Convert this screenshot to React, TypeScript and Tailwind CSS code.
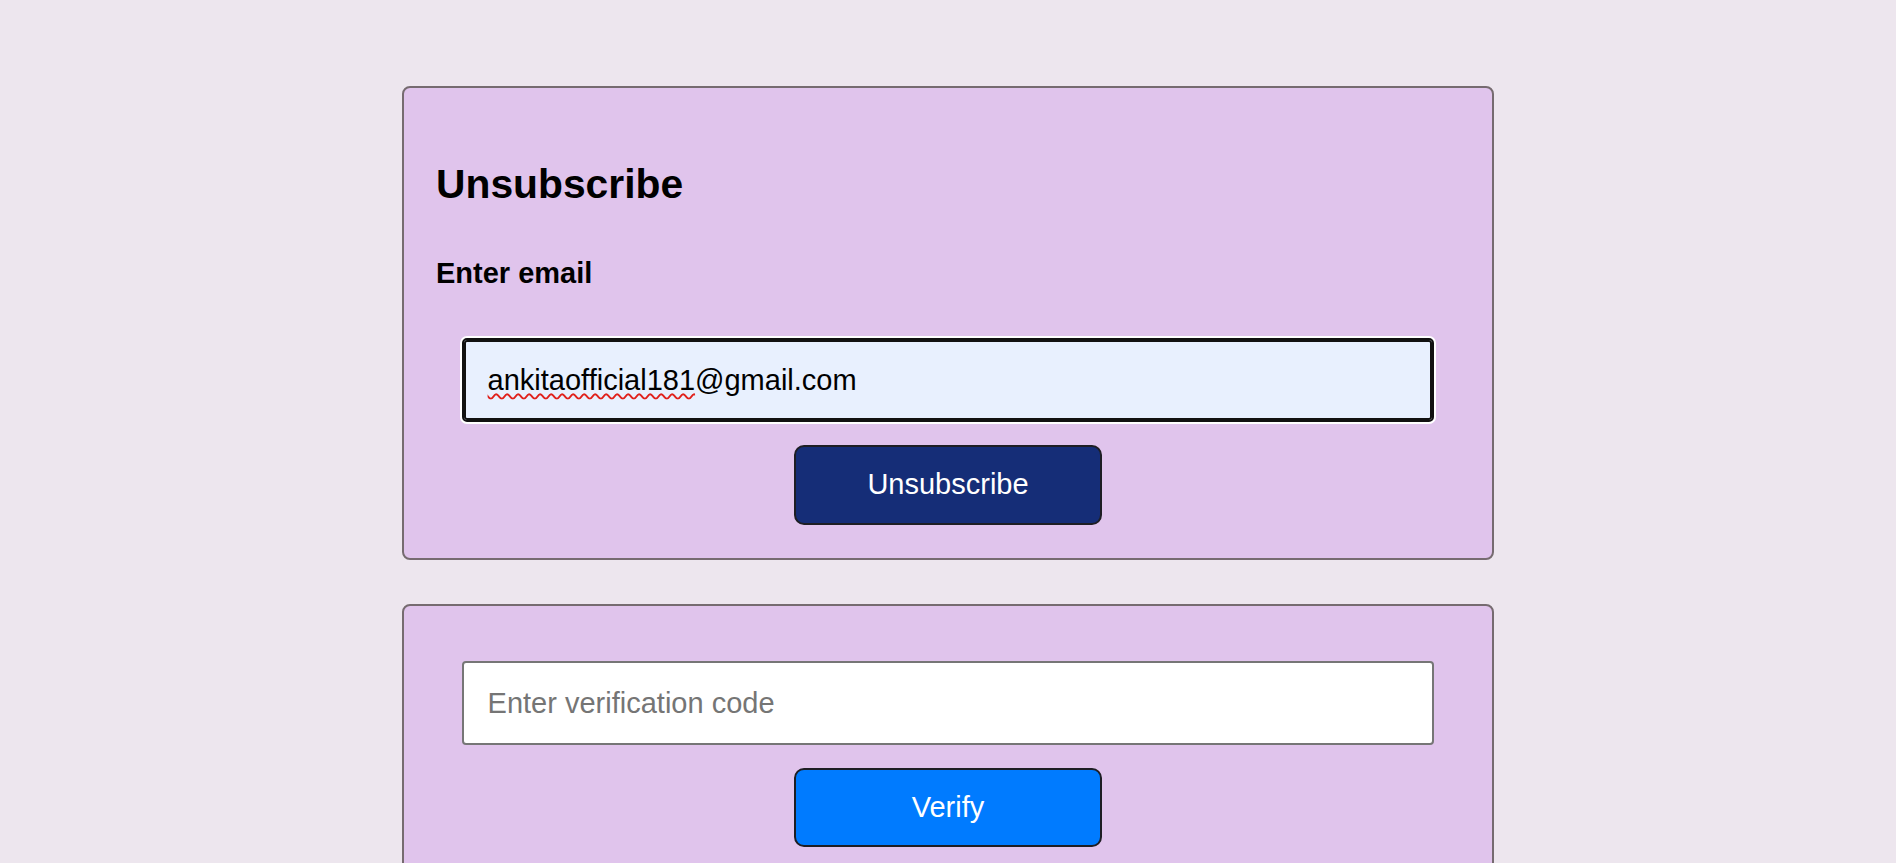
import React from "react";

export default function App() {
  const font = { fontFamily: '"Liberation Sans", Arial, sans-serif' };
  return (
    <div
      className="min-h-[863px] w-full bg-[#ede6ee] pt-[85.5px] pb-[40px] text-black"
      style={font}
    >
      <div className="mx-auto flex w-[1092px] flex-col gap-[44px]">
        {/* Card 1 */}
        <div className="flex flex-col rounded-[8px] border-2 border-[#766b70] bg-[#e0c4ec] px-[32px] pb-[33px]">
          <h1 className="mt-[73.5px] text-[40.8px] font-bold leading-[46px]">Unsubscribe</h1>
          <label className="mt-[49.5px] text-[29px] font-bold leading-[33px]">Enter email</label>
          <div className="relative mx-auto mt-[48.5px] w-[95%]">
            <input
              type="email"
              readOnly
              value="ankitaofficial181@gmail.com"
              className="block h-[84px] w-full rounded-[5px] border-2 border-[#111] bg-[#e8f0fe] px-[24px] text-[29px] text-black shadow-[inset_0_0_0_2px_#111,0_0_0_2px_#fff] outline-none"
              style={font}
            />
            <span
              aria-hidden="true"
              className="pointer-events-none absolute left-[26px] top-1/2 -translate-y-1/2 text-[29px] leading-[33px] text-transparent underline decoration-[#e0201b] decoration-wavy decoration-[2px] underline-offset-[3px]"
            >
              ankitaofficial181
            </span>
          </div>
          <button className="mx-auto mt-[22.8px] h-[80px] w-[30%] rounded-[10px] border-2 border-[#1e1e24] bg-[#152d77] text-[29px] text-white">
            Unsubscribe
          </button>
        </div>

        {/* Card 2 */}
        <div className="flex flex-col rounded-[8px] border-2 border-[#766b70] bg-[#e0c4ec] px-[32px] pb-[31.5px]">
          <input
            type="text"
            placeholder="Enter verification code"
            className="mx-auto mt-[55.5px] block h-[84px] w-[95%] rounded-[4px] border-2 border-[#767676] bg-white px-[24px] text-[29px] text-black placeholder:text-[#757575] outline-none"
            style={font}
          />
          <button className="mx-auto mt-[23px] h-[79px] w-[30%] rounded-[10px] border-2 border-[#1e1e24] bg-[#007bff] text-[29px] text-white">
            Verify
          </button>
        </div>
      </div>
    </div>
  );
}
